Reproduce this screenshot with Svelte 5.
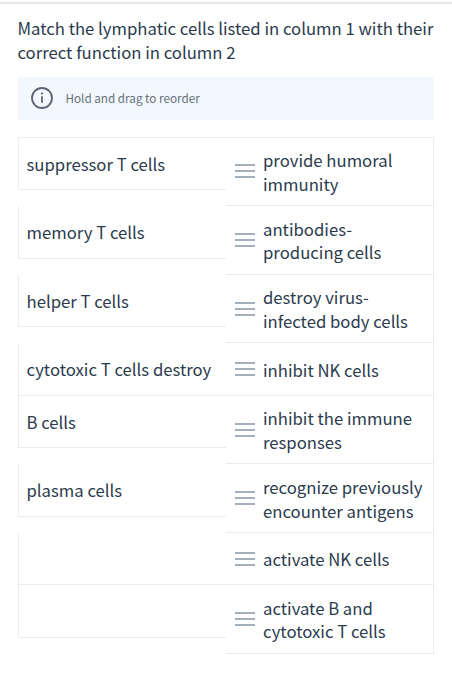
<script>
  const rows = [
    { term: 'suppressor T cells', lines: ['provide humoral', 'immunity'] },
    { term: 'memory T cells', lines: ['antibodies-', 'producing cells'] },
    { term: 'helper T cells', lines: ['destroy virus-', 'infected body cells'] },
    { term: 'cytotoxic T cells destroy', lines: ['inhibit NK cells'] },
    { term: 'B cells', lines: ['inhibit the immune', 'responses'] },
    { term: 'plasma cells', lines: ['recognize previously', 'encounter antigens'] },
    { term: '', lines: ['activate NK cells'] },
    { term: '', lines: ['activate B and', 'cytotoxic T cells'] }
  ];
</script>

<main class="question">
  <h1>Match the lymphatic cells listed in column 1 with their<br />correct function in column 2</h1>

  <div class="hint">
    <svg class="info" viewBox="0 0 22 22" width="22" height="22">
      <circle cx="11" cy="11" r="10" fill="none" stroke="currentColor" stroke-width="1.8" />
      <path d="M11 9.2v6.6" fill="none" stroke="currentColor" stroke-width="1.8" />
      <circle cx="11" cy="6.6" r="1.1" fill="currentColor" />
    </svg>
    <span>Hold and drag to reorder</span>
  </div>

  <div class="list">
    {#each rows as row}
      <div class="row">
        <div class="term">{row.term}</div>
        <div class="answer">
          <svg class="handle" viewBox="0 0 20 14" width="20" height="14">
            <path d="M0 1h20M0 7h20M0 13h20" stroke="currentColor" stroke-width="2" />
          </svg>
          <div class="text">
            {#each row.lines as line}
              <div>{line}</div>
            {/each}
          </div>
        </div>
      </div>
    {/each}
  </div>
</main>

<style>
  :global(body) {
    background: #fff;
  }

  .question {
    box-sizing: border-box;
    height: 700px;
    padding: 16px 18px 0 17.5px;
    border-top: 1px solid #fff;
    box-shadow: inset 0 1px #fafafa, inset 0 3px #e8e8e8;
    font-family: 'Noto Sans CJK SC', 'Noto Sans', sans-serif;
    font-size: 16.72px;
    line-height: 23.6px;
    color: #2b3b4e;
  }

  h1 {
    margin: 0;
    font-size: inherit;
    font-weight: 400;
    white-space: nowrap;
  }

  .hint {
    display: flex;
    align-items: center;
    gap: 13px;
    box-sizing: border-box;
    height: 43px;
    margin-top: 12.5px;
    padding-left: 13px;
    background: #f3f8ff;
    font-size: 11.7px;
    color: #66707c;
  }

  .info {
    color: #5b6573;
  }

  .list {
    margin-top: 17px;
    border-top: 1px solid #e9eaeb;
  }

  .row {
    display: flex;
    align-items: flex-start;
  }

  .term,
  .answer {
    box-sizing: border-box;
    min-height: 52.4px;
    border-bottom: 1px solid #e9eaeb;
    white-space: nowrap;
  }

  .term {
    width: 208px;
    padding: 15px 0 0 8px;
    border-left: 1px solid #ededee;
  }

  .answer {
    display: flex;
    flex: 1;
    align-items: center;
    gap: 8.5px;
    padding: 10.2px 0 10.2px 9px;
    border-right: 1px solid #ededee;
  }

  .handle {
    flex: none;
    color: #a6b0bd;
  }

  .text {
    position: relative;
    top: 1.4px;
  }
</style>
